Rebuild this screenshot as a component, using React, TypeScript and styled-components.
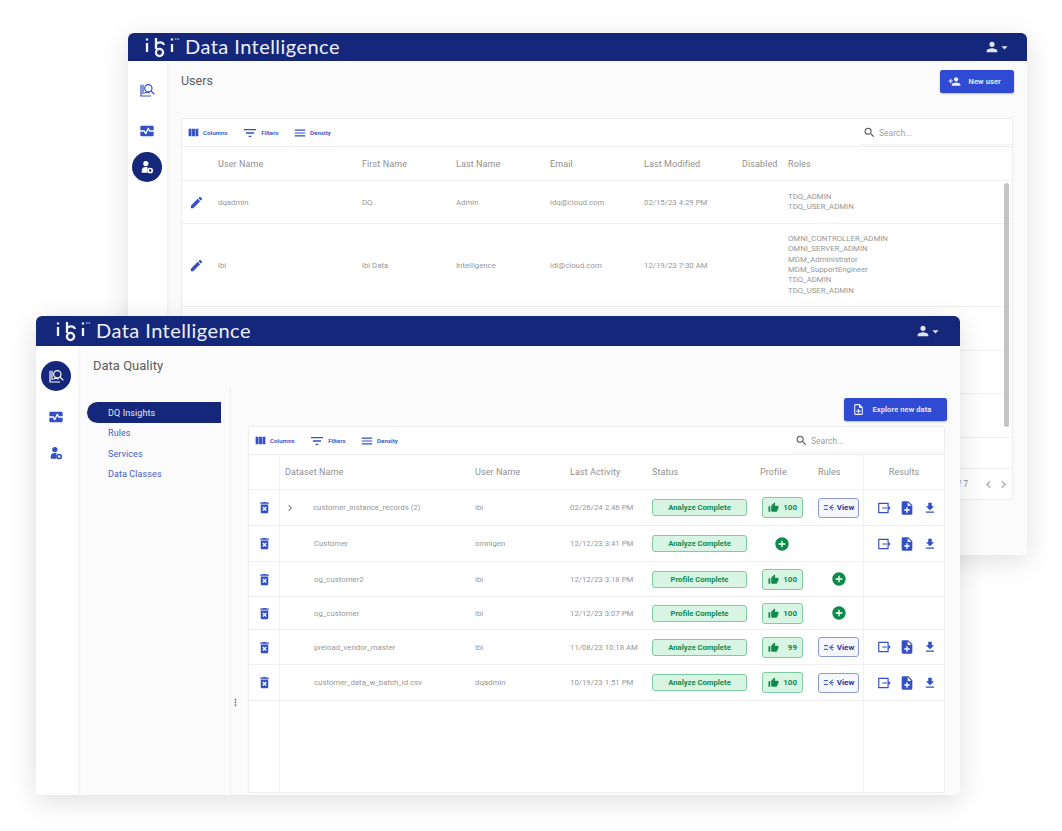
import React from 'react';
import styled, { createGlobalStyle } from 'styled-components';
import {
	MdAddCircle,
	MdArrowDropDown,
	MdChevronLeft,
	MdChevronRight,
	MdDeleteForever,
	MdEdit,
	MdFileDownload,
	MdFilterList,
	MdMenu,
	MdMonitorHeart,
	MdMoreVert,
	MdNoteAdd,
	MdOutlineNoteAdd,
	MdPerson,
	MdPersonAdd,
	MdSearch,
	MdThumbUp,
	MdViewColumn,
} from 'react-icons/md';

const NAVY = '#14277a';
const BLUE = '#2f4bd3';
const ICON_BLUE = '#3350c4';

const GlobalStyle = createGlobalStyle`
	html, body {
		margin: 0;
		padding: 0;
		background: #fff;
	}
	body {
		font-family: Roboto, "Liberation Sans", sans-serif;
	}
	* {
		box-sizing: border-box;
	}
`;

const Desktop = styled.div`
	position: relative;
	width: 1062px;
	height: 831px;
	overflow: hidden;
	background: #fff;
`;

const Window = styled.section<{ $left: number; $top: number; $width: number; $height: number }>`
	position: absolute;
	isolation: isolate;
	left: ${(p) => p.$left}px;
	top: ${(p) => p.$top}px;
	width: ${(p) => p.$width}px;
	height: ${(p) => p.$height}px;
	display: flex;
	flex-direction: column;
	background: #fbfbfb;
	border-radius: 6px 6px 4px 4px;
	box-shadow: 0 6px 28px rgba(0, 0, 0, 0.13);
	overflow: hidden;
`;

const Header = styled.header<{ $height: number; $pad: number; $right: number }>`
	flex: 0 0 ${(p) => p.$height}px;
	display: flex;
	align-items: center;
	padding: 0 ${(p) => p.$right}px 0 ${(p) => p.$pad}px;
	background: ${NAVY};
	color: #fff;
`;

const Brand = styled.span`
	flex: 1;
	margin: 0 0 3px 5px;
	font-family: Lato, sans-serif;
	font-weight: 400;
	font-size: 20px;
	letter-spacing: 0.45px;
	color: #eef1fa;
`;

const UserMenu = styled.span`
	display: inline-flex;
	align-items: center;
	color: #dfe3f2;
	font-size: 14px;

	svg + svg {
		margin-left: -3px;
	}
`;

const Body = styled.div`
	flex: 1;
	display: flex;
	min-height: 0;
`;

const Sidebar = styled.nav<{ $width: number; $top: number }>`
	flex: 0 0 ${(p) => p.$width}px;
	display: flex;
	flex-direction: column;
	align-items: center;
	gap: 6px;
	padding: ${(p) => p.$top}px 2px 0 0;
	background: #fff;
	box-shadow: 1px 0 3px rgba(0, 0, 0, 0.05);
	z-index: 1;
`;

const NavIcon = styled.span<{ $active?: boolean }>`
	width: 30px;
	height: 30px;
	display: flex;
	align-items: center;
	justify-content: center;
	border-radius: 50%;
	background: ${(p) => (p.$active ? NAVY : 'transparent')};
	color: ${(p) => (p.$active ? '#fff' : ICON_BLUE)};

	&:first-child {
		margin-bottom: 5px;
	}
`;

const Main = styled.main<{ $pad?: number }>`
	flex: 1;
	min-width: 0;
	display: flex;
	flex-direction: column;
	padding: ${(p) => (p.$pad ? `9px ${p.$pad}px 0` : '0')};
`;

const TitleRow = styled.div`
	display: flex;
	justify-content: space-between;
	align-items: flex-start;
	height: 48px;
	margin-right: -1px;
`;

const PageTitle = styled.h1<{ $size: number; $color: string }>`
	margin: 0;
	font-weight: 400;
	font-size: ${(p) => p.$size}px;
	line-height: 22px;
	color: ${(p) => p.$color};
`;

const PrimaryButton = styled.button<{ $width: number }>`
	width: ${(p) => p.$width}px;
	height: 23px;
	display: flex;
	align-items: center;
	gap: 7.5px;
	padding: 0 0 0 8px;
	border: 0;
	border-radius: 2.5px;
	background: ${BLUE};
	box-shadow: 0 1px 2px rgba(0, 0, 0, 0.25);
	color: #eef0fb;
	font: 600 7.5px Roboto, sans-serif;
	letter-spacing: 0.1px;
`;

const Card = styled.div<{ $height?: number }>`
	position: relative;
	display: flex;
	flex-direction: column;
	width: 100%;
	background: #fff;
	border: 1px solid #efefef;
	border-radius: 2px;
	box-shadow: 0 0 2px rgba(0, 0, 0, 0.04);
	${(p) => (p.$height ? `height: ${p.$height}px;` : 'flex: 1;')}
`;

const Toolbar = styled.div`
	flex: 0 0 28px;
	display: flex;
	align-items: center;
	justify-content: space-between;
	padding-left: 5px;
	border-bottom: 1px solid #ececec;
`;

const Tools = styled.div`
	display: flex;
	align-items: center;
	gap: 14.5px;
`;

const Tool = styled.span`
	display: inline-flex;
	align-items: center;
	gap: 3px;
	color: ${ICON_BLUE};
	font-size: 6.2px;
	font-weight: 600;
`;

const SearchBox = styled.div<{ $width: number }>`
	width: ${(p) => p.$width}px;
	height: 22px;
	display: flex;
	align-items: center;
	gap: 3px;
	padding-left: 3px;
	color: #a0a0a0;
	font-size: 8.5px;
	box-shadow: 0 1px 1px rgba(0, 0, 0, 0.05);

	svg {
		color: #555;
	}
`;

const Row = styled.div<{ $columns: string; $height?: number; $fill?: boolean }>`
	display: grid;
	grid-template-columns: ${(p) => p.$columns};
	align-items: stretch;
	color: #979797;
	font-size: 7.8px;
	border-bottom: 1px solid #efefef;
	${(p) => (p.$fill ? 'flex: 1; border-bottom: 0;' : `flex: 0 0 ${p.$height}px;`)}
`;

const HeadRow = styled(Row)`
	font-size: 9px;
	letter-spacing: 0.1px;
	color: #8f8f8f;
`;

const Cell = styled.div<{ $center?: boolean; $pad?: number; $divider?: boolean }>`
	display: flex;
	align-items: center;
	min-width: 0;
	justify-content: ${(p) => (p.$center ? 'center' : 'flex-start')};
	padding-left: ${(p) => p.$pad ?? 0}px;
	${(p) => (p.$divider ? 'border-right: 1.5px solid #f1f1f1;' : '')}
`;

const ResultsCell = styled(Cell)`
	gap: 8px;
	padding-left: 13px;
	border-left: 1.5px solid #f1f1f1;
	color: ${ICON_BLUE};
`;

const ResultsHead = styled(Cell)`
	justify-content: center;
	border-left: 1.5px solid #f1f1f1;
`;

const ActionIcon = styled.span`
	display: flex;
	color: ${ICON_BLUE};
`;

const Expander = styled.span`
	width: 29px;
	margin-left: -1px;
	display: flex;
	color: #777;
`;

const Roles = styled.div`
	line-height: 10.4px;
`;

const Scrollbar = styled.span`
	position: absolute;
	right: 3px;
	top: 64px;
	width: 5px;
	height: 244px;
	border-radius: 3px;
	background: #c4c4c4;
`;

const Pagination = styled.div`
	margin-top: auto;
	flex: 0 0 31px;
	display: flex;
	align-items: center;
	justify-content: flex-end;
	padding-right: 1px;
	border-top: 1px solid #efefef;
	color: #8d8d8d;
	font-size: 8.5px;

	span {
		margin-right: 13px;
	}
`;

const StatusBadge = styled.span`
	width: 95px;
	height: 17px;
	display: flex;
	align-items: center;
	justify-content: center;
	border: 1px solid #7fcba0;
	border-radius: 3px;
	background: #d8f5e3;
	color: #0e8a4f;
	font-size: 7.7px;
	font-weight: 700;
`;

const ScoreBadge = styled.span`
	width: 41px;
	height: 21px;
	display: flex;
	align-items: center;
	justify-content: space-between;
	padding: 0 5px;
	border: 1px solid #7fcba0;
	border-radius: 3px;
	background: #d8f5e3;
	color: #0e8a4f;
	font-size: 8px;
	font-weight: 700;
`;

const ViewButton = styled.span`
	width: 41px;
	height: 20px;
	display: flex;
	align-items: center;
	justify-content: center;
	gap: 3px;
	border: 1px solid #8c9bd6;
	border-radius: 3px;
	background: #f5f7fd;
	color: #1f3b9e;
	font-size: 8px;
	font-weight: 700;
`;

const AddIcon = styled.span`
	display: flex;
	color: #0c8a48;
`;

const SubPane = styled.div`
	flex: 1;
	min-height: 0;
	display: flex;
`;

const SubMenu = styled.div`
	flex: 0 0 153px;
	display: flex;
	flex-direction: column;
	padding: 16px 0 0 9px;
	border-right: 1.5px solid #f0f0f0;
`;

const SubMenuItem = styled.a<{ $active?: boolean }>`
	height: 21px;
	margin-bottom: -0.4px;
	width: 134px;
	display: flex;
	align-items: center;
	padding-left: 21px;
	font-size: 9px;
	letter-spacing: 0.1px;
	color: ${(p) => (p.$active ? '#e6e9f7' : '#4460c4')};
	background: ${(p) => (p.$active ? NAVY : 'transparent')};
	border-radius: 11px 0 0 11px;
`;

const ContentPane = styled.div`
	position: relative;
	flex: 1;
	min-width: 0;
	display: flex;
	flex-direction: column;
	padding: 12px 13px 2px 17px;
`;

const ButtonRow = styled.div`
	display: flex;
	justify-content: flex-end;
	margin-bottom: 5px;
`;

const TableWrap = styled.div`
	flex: 1;
	display: flex;
	min-height: 0;
	margin-right: 2px;
`;

const Handle = styled.span`
	position: absolute;
	left: -1px;
	bottom: 87px;
	display: flex;
	color: #777;
`;

const TitleBand = styled.div`
	flex: 0 0 40px;
	display: flex;
	align-items: center;
	padding-left: 15px;
`;

function IbiLogo() {
	return (
		<svg width="35" height="24" viewBox="0 0 35 24" fill="none" stroke="#f2f4fb" strokeWidth="2.3">
			<path d="M2 3.500v2M2 8v9M11 3v11M11 9c3-2.500 7-2 8 1" />
			<circle cx="14.500" cy="17.500" r="3.600" />
			<path d="M27 3.500v2M27 9v8" />
			<path d="M30 4h1.600M32.500 4h1.600" strokeWidth="1.200" />
		</svg>
	);
}

function InsightIcon() {
	return (
		<svg width="16" height="16" viewBox="0 0 24 24" fill="none" stroke="currentColor" strokeWidth="1.800">
			<path d="M3 4v17h15M6 4v14" />
			<circle cx="14" cy="9.500" r="5.500" />
			<path d="M18 13.500l5 5M8 17l4-2 4 2" />
		</svg>
	);
}

function AdminIcon() {
	return (
		<svg width="14" height="14" viewBox="0 0 24 24" fill="none" stroke="currentColor">
			<circle cx="10" cy="6" r="4.500" fill="currentColor" stroke="none" />
			<path d="M3 22v-4c0-4 3-6 7-6 1.500 0 2 .2 3 .6V22z" fill="currentColor" stroke="none" />
			<circle cx="17.500" cy="18" r="3.500" strokeWidth="2.800" />
		</svg>
	);
}

function RuleIcon() {
	return (
		<svg width="11" height="11" viewBox="0 0 24 24" fill="none" stroke="currentColor" strokeWidth="2">
			<path d="M2 8h9M2 16h9M22 6l-8 6 8 6M17 12h6" />
		</svg>
	);
}

function ExportIcon() {
	return (
		<svg width="14" height="14" viewBox="0 0 24 24" fill="none" stroke="currentColor" strokeWidth="2">
			<path d="M19 8V4H3v16h16v-4M9 12h13M18 8l4 4-4 4" />
		</svg>
	);
}

function ToolbarTools() {
	return (
		<Tools>
			<Tool>
				<MdViewColumn size={13} />
				Columns
			</Tool>
			<Tool>
				<MdFilterList size={16} />
				Filters
			</Tool>
			<Tool>
				<MdMenu size={14} />
				Density
			</Tool>
		</Tools>
	);
}

const userColumns = '36px 144px 94px 94px 94px 98px 46px 1fr';
const datasetColumns = '31px 195px 95px 82px 108px 58px 45px 1fr';

const users = [
	{
		height: 43,
		user: 'dqadmin',
		first: 'DQ',
		last: 'Admin',
		email: 'idq@cloud.com',
		modified: '02/15/23 4:29 PM',
		roles: ['TDQ_ADMIN', 'TDQ_USER_ADMIN'],
	},
	{
		height: 83,
		user: 'ibi',
		first: 'ibi Data',
		last: 'Intelligence',
		email: 'idi@cloud.com',
		modified: '12/19/23 7:30 AM',
		roles: [
			'OMNI_CONTROLLER_ADMIN',
			'OMNI_SERVER_ADMIN',
			'MDM_Administrator',
			'MDM_SupportEngineer',
			'TDQ_ADMIN',
			'TDQ_USER_ADMIN',
		],
	},
];

type Dataset = {
	height: number;
	name: string;
	expandable?: boolean;
	user: string;
	activity: string;
	status: string;
	score?: number;
	rules?: 'view' | 'add';
	results?: boolean;
};

const datasets: Dataset[] = [
	{ height: 36, name: 'customer_instance_records (2)', expandable: true, user: 'ibi', activity: '02/26/24 2:46 PM', status: 'Analyze Complete', score: 100, rules: 'view', results: true },
	{ height: 36, name: 'Customer', user: 'omnigen', activity: '12/12/23 3:41 PM', status: 'Analyze Complete', results: true },
	{ height: 35, name: 'og_customer2', user: 'ibi', activity: '12/12/23 3:18 PM', status: 'Profile Complete', score: 100, rules: 'add' },
	{ height: 33, name: 'og_customer', user: 'ibi', activity: '12/12/23 3:07 PM', status: 'Profile Complete', score: 100, rules: 'add' },
	{ height: 35, name: 'preload_vendor_master', user: 'ibi', activity: '11/08/23 10:18 AM', status: 'Analyze Complete', score: 99, rules: 'view', results: true },
	{ height: 36, name: 'customer_data_w_batch_id.csv', user: 'dqadmin', activity: '10/19/23 1:51 PM', status: 'Analyze Complete', score: 100, rules: 'view', results: true },
];

function UsersWindow() {
	return (
		<Window $left={128} $top={33} $width={899} $height={522}>
			<Header $height={28} $pad={17} $right={15}>
				<IbiLogo />
				<Brand>Data Intelligence</Brand>
				<UserMenu>
					<MdPerson size={16} />
					<MdArrowDropDown size={15} />
				</UserMenu>
			</Header>
			<Body>
				<Sidebar $width={39} $top={14}>
					<NavIcon>
						<InsightIcon />
					</NavIcon>
					<NavIcon>
						<MdMonitorHeart size={16} />
					</NavIcon>
					<NavIcon $active>
						<AdminIcon />
					</NavIcon>
				</Sidebar>
				<Main $pad={14}>
					<TitleRow>
						<PageTitle $size={12.5} $color="#5c5c5c">
							Users
						</PageTitle>
						<PrimaryButton $width={74}>
							<MdPersonAdd size={13} />
							New user
						</PrimaryButton>
					</TitleRow>
					<Card $height={382}>
						<Toolbar>
							<ToolbarTools />
							<SearchBox $width={152}>
								<MdSearch size={13} />
								Search...
							</SearchBox>
						</Toolbar>
						<HeadRow $columns={userColumns} $height={34}>
							<Cell />
							<Cell>User Name</Cell>
							<Cell>First Name</Cell>
							<Cell>Last Name</Cell>
							<Cell>Email</Cell>
							<Cell>Last Modified</Cell>
							<Cell>Disabled</Cell>
							<Cell>Roles</Cell>
						</HeadRow>
						{users.map((u) => (
							<Row key={u.user} $columns={userColumns} $height={u.height}>
								<Cell $pad={7}>
									<ActionIcon>
										<MdEdit size={15} />
									</ActionIcon>
								</Cell>
								<Cell>{u.user}</Cell>
								<Cell>{u.first}</Cell>
								<Cell>{u.last}</Cell>
								<Cell>{u.email}</Cell>
								<Cell>{u.modified}</Cell>
								<Cell />
								<Cell>
									<Roles>
										{u.roles.map((role) => (
											<div key={role}>{role}</div>
										))}
									</Roles>
								</Cell>
							</Row>
						))}
						<Row $columns={userColumns} $height={44} />
						<Row $columns={userColumns} $height={43} />
						<Row $columns={userColumns} $height={44} />
						<Scrollbar />
						<Pagination>
							<span>1-2 of 7</span>
							<MdChevronLeft size={15} color="#a8a8a8" />
							<MdChevronRight size={15} color="#a8a8a8" />
						</Pagination>
					</Card>
				</Main>
			</Body>
		</Window>
	);
}

function DatasetRow({ row }: { row: Dataset }) {
	return (
		<Row $columns={datasetColumns} $height={row.height}>
			<Cell $center $divider>
				<ActionIcon>
					<MdDeleteForever size={15} />
				</ActionIcon>
			</Cell>
			<Cell $pad={row.expandable ? 5 : 34}>
				{row.expandable && (
					<Expander>
						<MdChevronRight size={12} />
					</Expander>
				)}
				{row.name}
			</Cell>
			<Cell>{row.user}</Cell>
			<Cell>{row.activity}</Cell>
			<Cell>
				<StatusBadge>{row.status}</StatusBadge>
			</Cell>
			<Cell $pad={row.score ? 2 : 14}>
				{row.score ? (
					<ScoreBadge>
						<MdThumbUp size={11} />
						{row.score}
					</ScoreBadge>
				) : (
					<AddIcon>
						<MdAddCircle size={16} />
					</AddIcon>
				)}
			</Cell>
			<Cell $pad={row.rules === 'add' ? 13 : 0}>
				{row.rules === 'view' && (
					<ViewButton>
						<RuleIcon />
						View
					</ViewButton>
				)}
				{row.rules === 'add' && (
					<AddIcon>
						<MdAddCircle size={16} />
					</AddIcon>
				)}
			</Cell>
			<ResultsCell>
				{row.results && (
					<>
						<ExportIcon />
						<MdNoteAdd size={16} />
						<MdFileDownload size={14} />
					</>
				)}
			</ResultsCell>
		</Row>
	);
}

function QualityWindow() {
	return (
		<Window $left={36} $top={316} $width={924} $height={479}>
			<Header $height={30} $pad={20} $right={17}>
				<IbiLogo />
				<Brand>Data Intelligence</Brand>
				<UserMenu>
					<MdPerson size={16} />
					<MdArrowDropDown size={15} />
				</UserMenu>
			</Header>
			<Body>
				<Sidebar $width={42} $top={15}>
					<NavIcon $active>
						<InsightIcon />
					</NavIcon>
					<NavIcon>
						<MdMonitorHeart size={16} />
					</NavIcon>
					<NavIcon>
						<AdminIcon />
					</NavIcon>
				</Sidebar>
				<Main>
					<TitleBand>
						<PageTitle $size={13} $color="#5c5c5c">
							Data Quality
						</PageTitle>
					</TitleBand>
					<SubPane>
						<SubMenu>
							<SubMenuItem $active>DQ Insights</SubMenuItem>
							<SubMenuItem>Rules</SubMenuItem>
							<SubMenuItem>Services</SubMenuItem>
							<SubMenuItem>Data Classes</SubMenuItem>
						</SubMenu>
						<ContentPane>
							<Handle>
								<MdMoreVert size={11} />
							</Handle>
							<ButtonRow>
								<PrimaryButton $width={103}>
									<MdOutlineNoteAdd size={13} />
									Explore new data
								</PrimaryButton>
							</ButtonRow>
							<TableWrap>
								<Card>
									<Toolbar>
										<ToolbarTools />
										<SearchBox $width={152}>
											<MdSearch size={13} />
											Search...
										</SearchBox>
									</Toolbar>
									<HeadRow $columns={datasetColumns} $height={35}>
										<Cell $divider />
										<Cell $pad={5}>Dataset Name</Cell>
										<Cell>User Name</Cell>
										<Cell>Last Activity</Cell>
										<Cell>Status</Cell>
										<Cell>Profile</Cell>
										<Cell>Rules</Cell>
										<ResultsHead>Results</ResultsHead>
									</HeadRow>
									{datasets.map((row) => (
										<DatasetRow key={row.name} row={row} />
									))}
									<Row $columns={datasetColumns} $fill>
										<Cell $divider />
										<Cell />
										<Cell />
										<Cell />
										<Cell />
										<Cell />
										<Cell />
										<ResultsCell />
									</Row>
								</Card>
							</TableWrap>
						</ContentPane>
					</SubPane>
				</Main>
			</Body>
		</Window>
	);
}

export default function App() {
	return (
		<Desktop>
			<GlobalStyle />
			<UsersWindow />
			<QualityWindow />
		</Desktop>
	);
}
